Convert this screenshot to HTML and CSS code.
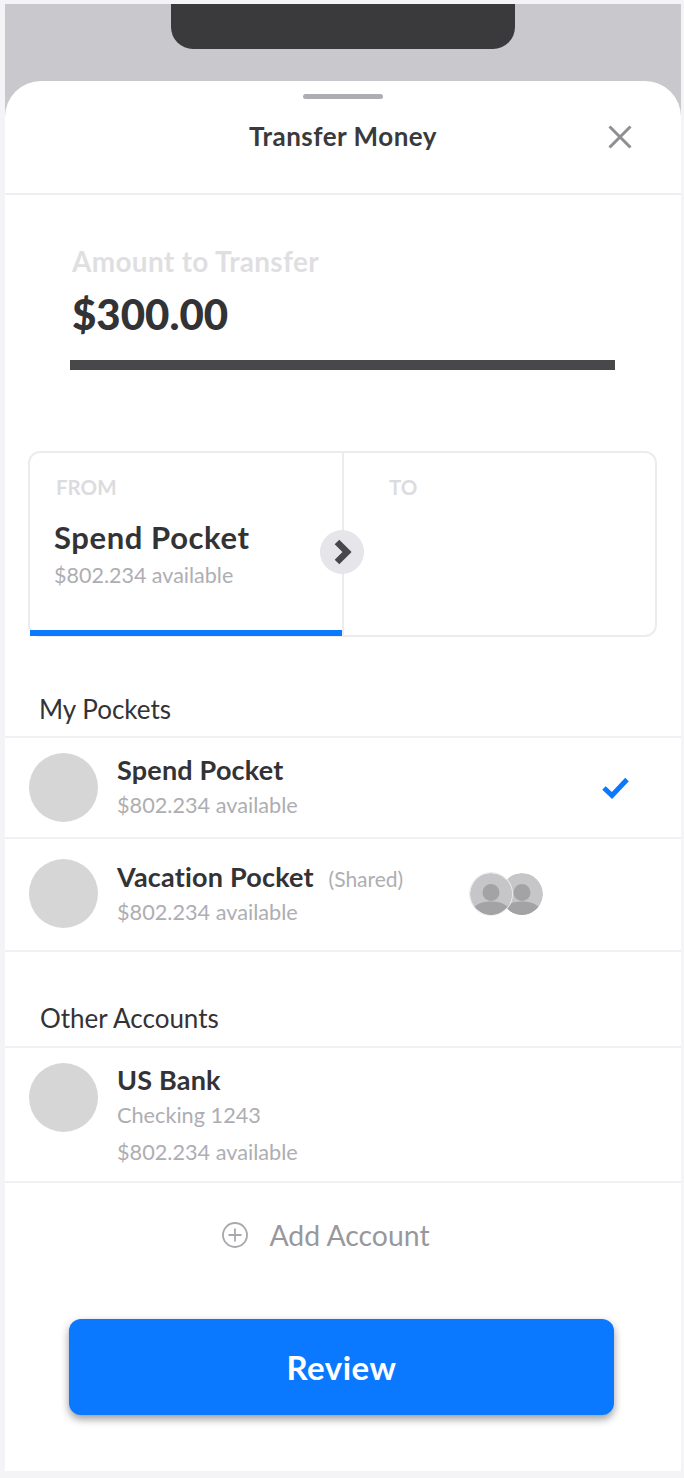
FILE: index.html
```html
<!DOCTYPE html>
<html lang="en">
<head>
<meta charset="utf-8">
<title>Transfer Money</title>
<link rel="stylesheet" href="styles.css">
</head>
<body>
<div class="phone">
  <div class="notch"></div>
  <main class="sheet">
    <header class="sheet-head">
      <div class="grabber"></div>
      <h1 class="title">Transfer Money</h1>
      <svg class="close" viewBox="0 0 24 24" aria-label="Close"><path d="M1.500 1.500 22.500 22.500M22.500 1.500 1.500 22.500"/></svg>
    </header>
    <section class="amount">
      <div class="amount-label">Amount to Transfer</div>
      <div class="amount-value">$300.00</div>
      <div class="amount-rule"></div>
    </section>
    <section class="route">
      <div class="route-from">
        <div class="route-label">FROM</div>
        <div class="route-name">Spend Pocket</div>
        <div class="route-sub">$802.234 available</div>
      </div>
      <div class="route-to"><div class="route-label">TO</div></div>
      <div class="route-arrow">
        <svg viewBox="0 0 20 26" width="20" height="26"><path d="M5 3 15 13 5 23" /></svg>
      </div>
    </section>
    <h2 class="group-title first">My Pockets</h2>
    <div class="row row-a">
      <div class="avatar"></div>
      <div class="row-text">
        <div class="row-name">Spend Pocket</div>
        <div class="row-sub">$802.234 available</div>
      </div>
      <svg class="check" viewBox="0 0 30 24" width="30" height="24"><path d="M3 12 11 19.500 26 3.500"/></svg>
    </div>
    <div class="row row-b">
      <div class="avatar"></div>
      <div class="row-text">
        <div class="row-name">Vacation Pocket <span class="shared">(Shared)</span></div>
        <div class="row-sub">$802.234 available</div>
      </div>
      <div class="people">
        <svg class="person person-front" viewBox="0 0 42 42"><circle cx="21" cy="21" r="21" fill="#c6c6c9"/><circle cx="21" cy="19.500" r="8.500" fill="#a3a3a6"/><path d="M4.500 34C8 30 14 28.500 21 28.500S34 30 37.500 34A21 21 0 0 1 4.500 34z" fill="#a3a3a6"/></svg>
        <svg class="person person-back" viewBox="0 0 42 42"><circle cx="21" cy="21" r="21" fill="#c6c6c9"/><circle cx="21" cy="19.500" r="8.500" fill="#a3a3a6"/><path d="M4.500 34C8 30 14 28.500 21 28.500S34 30 37.500 34A21 21 0 0 1 4.500 34z" fill="#a3a3a6"/></svg>
      </div>
    </div>
    <h2 class="group-title second">Other Accounts</h2>
    <div class="row row-c">
      <div class="avatar"></div>
      <div class="row-text">
        <div class="row-name">US Bank</div>
        <div class="row-sub">Checking 1243</div>
        <div class="row-sub third">$802.234 available</div>
      </div>
    </div>
    <div class="add">
      <svg viewBox="0 0 26 26" width="26" height="26"><circle cx="13" cy="13" r="12"/><path d="M13 6.500v13M6.500 13h13"/></svg>
      <span>Add Account</span>
    </div>
    <div class="cta-wrap"><button class="cta" type="button">Review</button></div>
  </main>
</div>
</body>
</html>
```

FILE: styles.css
```css
* { box-sizing: border-box; }
html, body { margin: 0; height: 100%; }
body {
  background: #f4f4f6;
  font-family: "Lato", "Liberation Sans", sans-serif;
  color: #333336;
  padding: 4px 3px 6px 5px;
  overflow: hidden;
}
.phone {
  height: 1467px;
  background: #c9c8cd;
  display: flex;
  flex-direction: column;
  align-items: center;
}
.notch {
  width: 344px;
  height: 45px;
  background: #3a3a3c;
  border-radius: 0 0 22px 22px;
  flex: none;
}
.sheet {
  align-self: stretch;
  flex: 1;
  margin-top: 32px;
  background: #fff;
  border-radius: 36px 36px 0 0;
  display: flex;
  flex-direction: column;
}
.sheet-head {
  height: 114px;
  border-bottom: 2px solid #eeeef1;
  display: flex;
  flex-direction: column;
  align-items: center;
  position: relative;
  flex: none;
}
.grabber {
  width: 80px;
  height: 5px;
  margin-top: 13px;
  border-radius: 3px;
  background: #aeaeb2;
}
.title {
  margin: 20px 0 0;
  font-size: 26px;
  line-height: 34px;
  font-weight: 700;
  letter-spacing: .5px;
  color: #3a3a3c;
}
.close {
  position: absolute;
  right: 49px;
  top: 44px;
  width: 24px;
  height: 24px;
  fill: none;
  stroke: #8e8e93;
  stroke-width: 3;
}
.amount { padding: 49px 66px 0 65px; flex: none; height: 256px; }
.amount-label { margin-left: 2px; font-size: 28px; line-height: 34px; font-weight: 700; letter-spacing: .3px; color: #dfdfe2; }
.amount-value { margin: 11px 0 0 2px; font-size: 42px; line-height: 50px; font-weight: 900; color: #333336; }
.amount-rule { height: 10px; margin-top: 21px; background: #48484a; }
.route {
  position: relative;
  flex: none;
  height: 186px;
  margin: 0 24px 0 23px;
  border: 2px solid #ececef;
  border-radius: 12px;
  display: grid;
  grid-template-columns: 312px 1fr;
}
.route-from {
  border-bottom: 6px solid #0a78ff;
  padding: 21px 0 0 24px;
  margin-bottom: -1px;
}
.route-to { border-left: 2px solid #ececef; padding: 21px 0 0 43px; }
.route-label { font-size: 20.500px; line-height: 26px; font-weight: 700; color: #dcdce0; margin-left: 2px; }
.route-name { margin-top: 19px; font-size: 31px; line-height: 36px; font-weight: 700; letter-spacing: .6px; color: #333336; }
.route-sub { margin-top: 6px; font-size: 21.500px; line-height: 28px; color: #aeaeb2; }
.route-arrow {
  position: absolute;
  left: 290px;
  top: 77px;
  width: 44px;
  height: 44px;
  border-radius: 50%;
  background: #e5e5ea;
  display: flex;
  align-items: center;
  justify-content: center;
}
.route-arrow svg { fill: none; stroke: #48484a; stroke-width: 6.500; }
.group-title { margin: 0; font-size: 26px; font-weight: 400; color: #333336; line-height: 32px; padding-left: 35px; flex: none; }
.group-title.first { margin-top: 56px; padding-bottom: 11px; padding-left: 34px; border-bottom: 2px solid #f1f1f3; }
.group-title.second { margin-top: 50px; padding-bottom: 12px; border-bottom: 2px solid #f1f1f3; }
.row {
  display: flex;
  align-items: flex-start;
  border-bottom: 2px solid #f1f1f3;
  padding-left: 24px;
  position: relative;
  flex: none;
}
.row-a { height: 101px; padding-top: 15px; }
.row-b { height: 113px; padding-top: 20px; }
.row-c { height: 135px; padding-top: 15px; }
.avatar { width: 69px; height: 69px; border-radius: 50%; background: #d6d6d6; flex: none; }
.row-text { margin-left: 19px; }
.row-b .row-text { margin-top: 1px; }
.row-name { font-size: 27px; line-height: 34px; font-weight: 700; letter-spacing: .2px; color: #333336; }
.row-sub { margin-top: 2px; font-size: 21.700px; line-height: 33px; color: #aeaeb2; }
.row-b .row-sub { margin-top: 0; }
.row-sub.third { margin-top: 4px; }
.shared { margin-left: 8px; font-size: 21px; font-weight: 400; letter-spacing: 0; color: #aeaeb2; }
.check { position: absolute; left: 596px; top: 38px; fill: none; stroke: #0a78ff; stroke-width: 5; }
.people { position: absolute; left: 465px; top: 34px; display: flex; }
.person { width: 42px; height: 42px; display: block; border-radius: 50%; }
.person-front { position: relative; z-index: 1; box-shadow: 0 0 0 1px #ececee; }
.person-back { margin-left: -11px; }
.add {
  flex: none;
  height: 103px;
  display: flex;
  align-items: center;
  justify-content: center;
  gap: 21px;
  padding-right: 34px;
  color: #98989c;
  font-size: 28.400px;
}
.add svg { fill: none; stroke: #a8a8ac; stroke-width: 1.800; }
.cta-wrap { padding: 0 67px 0 64px; margin-top: 33px; flex: none; }
.cta {
  width: 100%;
  height: 96px;
  border: 0;
  border-radius: 12px;
  background: #0a78ff;
  color: #fff;
  font-family: inherit;
  font-size: 33px;
  font-weight: 700;
  letter-spacing: .5px;
  box-shadow: 0 4px 8px rgba(0, 0, 0, .4);
}
```
